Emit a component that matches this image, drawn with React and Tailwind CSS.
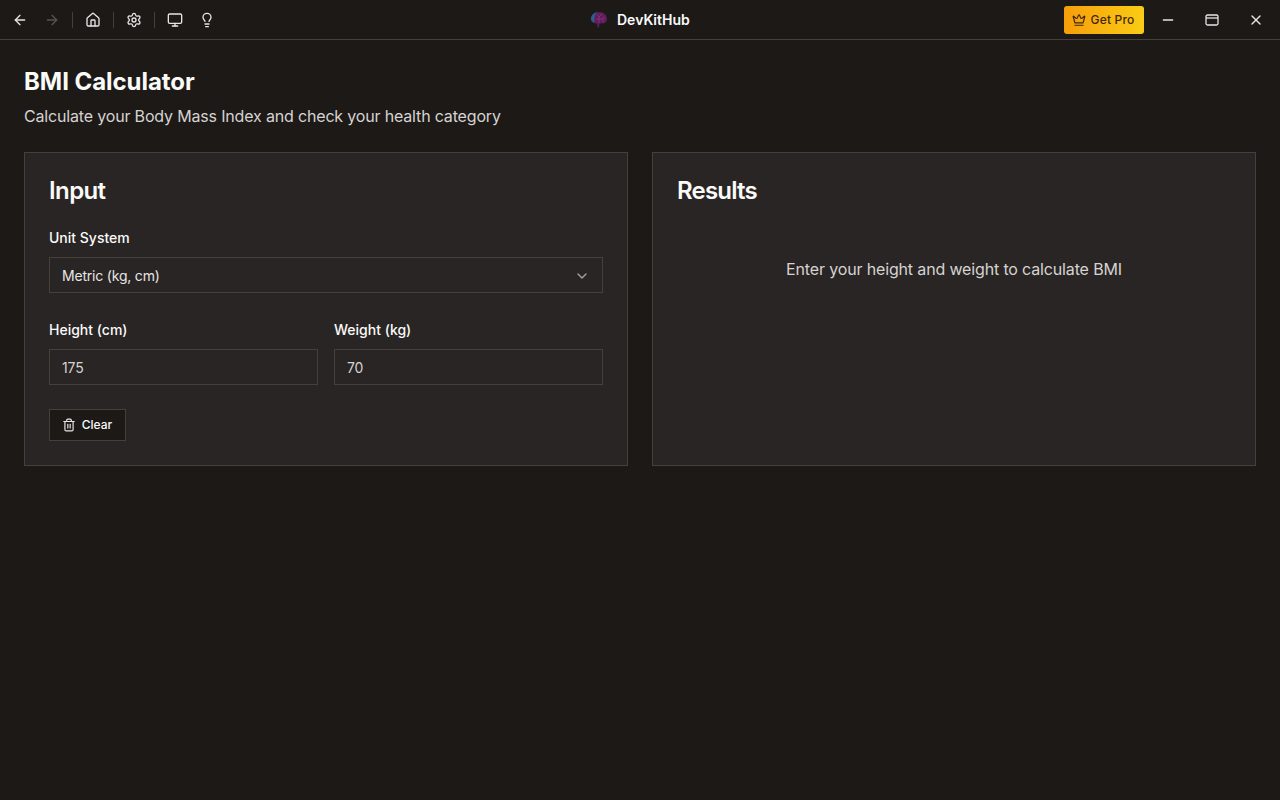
import React from "react";
import { ArrowLeft, ArrowRight, Home, Settings, Monitor, Lightbulb, Crown, Minus, X, Trash2, ChevronDown } from "lucide-react";

function Sep() {
  return <div className="w-px h-4 bg-[#44403c]" />;
}

function Brain() {
  return (
    <svg width="18" height="18" viewBox="0 0 18 18">
      <path d="M1 8c0-4 3-7 8-7s8 3 8 7c0 3-2 4.500-5 4.500H9.500L9 16.500H7.500L7 12.500C3.500 12.500 1 11 1 8z" fill="#5b1f5e" />
      <path d="M1 8c0-3 2-6 6-6.700C5 3.500 4 6 4.500 11.500 2.500 11 1 9.500 1 8z" fill="#2f5f86" />
      <path d="M7 3l2 3 3-3M6 8h6l3-2M9 6v6M12 8l1.500 3" stroke="#a02f7c" strokeWidth="0.800" fill="none" />
    </svg>
  );
}

function Field({ label, value }) {
  return (
    <div className="flex-1 flex flex-col gap-[9px]">
      <label className="text-sm leading-[20px] font-medium text-[#fafaf9] tracking-normal">{label}</label>
      <div className="h-9 border border-[#44403c] px-3 pt-px flex items-center text-sm text-[#d6d3d1]">{value}</div>
    </div>
  );
}

export default function App() {
  return (
    <div className="w-[1280px] h-[800px] bg-[#1c1917] flex flex-col overflow-hidden font-['Inter',sans-serif] tracking-[-0.15px]">
      <header className="h-10 shrink-0 border-b border-[#44403c] flex items-center justify-between relative">
        <div className="flex items-center pl-[12px] text-[#e7e5e4]">
          <div className="w-4 flex justify-center"><ArrowLeft size={16} strokeWidth={2} /></div>
          <div className="w-4 ml-4 flex justify-center text-[#57534e]"><ArrowRight size={16} strokeWidth={2} /></div>
          <div className="ml-[12px]"><Sep /></div>
          <div className="ml-3"><Home size={16} strokeWidth={2} /></div>
          <div className="ml-3"><Sep /></div>
          <div className="ml-3"><Settings size={16} strokeWidth={2} /></div>
          <div className="ml-3"><Sep /></div>
          <div className="ml-3"><Monitor size={16} strokeWidth={2} /></div>
          <div className="ml-4"><Lightbulb size={16} strokeWidth={2} /></div>
        </div>
        <div className="absolute left-[590px] top-0 h-10 flex items-center gap-[9px]">
          <Brain />
          <span className="text-sm font-semibold text-[#fafaf9] tracking-normal">DevKitHub</span>
        </div>
        <div className="flex items-center pr-[2px]">
          <button className="h-[28px] w-[80px] mr-[2px] pr-[1px] rounded-[3px] bg-gradient-to-r from-[#f59e0b] to-[#facc15] flex items-center justify-center gap-1 text-xs font-medium text-[#44260a] tracking-[0.2px]">
            <Crown size={14} strokeWidth={2} />
            Get Pro
          </button>
          <div className="w-11 flex justify-center text-[#e7e5e4]"><Minus size={16} /></div>
          <div className="w-11 flex justify-center text-[#e7e5e4]">
            <svg width="16" height="16" viewBox="0 0 16 16" fill="none" stroke="currentColor" strokeWidth="1.300">
              <rect x="2" y="3" width="12" height="10" rx="1.500" />
              <path d="M2 6h12" />
            </svg>
          </div>
          <div className="w-11 flex justify-center text-[#e7e5e4]"><X size={16} /></div>
        </div>
      </header>
      <main className="flex-1 px-6 pt-[26px]">
        <h1 className="text-2xl leading-8 font-bold text-[#fafaf9] tracking-[-0.05px]">BMI Calculator</h1>
        <p className="mt-[6px] text-base leading-6 text-[#d6d3d1] tracking-[-0.17px]">Calculate your Body Mass Index and check your health category</p>
        <div className="mt-6 grid grid-cols-2 gap-6">
          <section className="h-[314px] bg-[#292524] border border-[#44403c] px-6 pt-6">
            <h2 className="text-2xl leading-7 font-semibold text-[#fafaf9] tracking-[-0.6px]">Input</h2>
            <label className="block mt-[23px] text-sm leading-5 font-medium text-[#fafaf9] tracking-normal">Unit System</label>
            <div className="mt-[9px] h-9 border border-[#44403c] px-3 pt-px flex items-center justify-between text-sm text-[#e7e5e4] tracking-[-0.2px]">
              Metric (kg, cm)
              <ChevronDown size={16} className="text-[#a8a29e]" />
            </div>
            <div className="mt-[27px] flex gap-4">
              <Field label="Height (cm)" value="175" />
              <Field label="Weight (kg)" value="70" />
            </div>
            <button className="mt-6 h-8 w-[77px] bg-[#1c1917] border border-[#44403c] flex items-center justify-center gap-[6px] pr-[1px] text-xs font-medium text-[#fafaf9] tracking-normal">
              <Trash2 size={14} className="text-[#e7e5e4]" />
              Clear
            </button>
          </section>
          <section className="h-[314px] bg-[#292524] border border-[#44403c] px-6 pt-6">
            <h2 className="text-2xl leading-7 font-semibold text-[#fafaf9] tracking-[-0.8px]">Results</h2>
            <p className="mt-[52px] text-center text-base leading-6 text-[#d6d3d1]">Enter your height and weight to calculate BMI</p>
          </section>
        </div>
      </main>
    </div>
  );
}
